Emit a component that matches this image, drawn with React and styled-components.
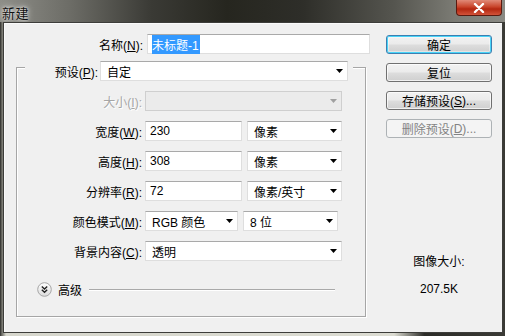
import React from "react";
import styled, { createGlobalStyle, css } from "styled-components";

const Global = createGlobalStyle`
  html, body {
    margin: 0;
    padding: 0;
    background: #2e2e2a;
  }
  body {
    font-family: "Liberation Sans", "Noto Sans CJK SC", sans-serif;
    font-size: 12px;
    color: #000;
  }
`;

const Window = styled.div`
  width: 505px;
  height: 336px;
  box-sizing: border-box;
  display: flex;
  flex-direction: column;
  padding: 0 2px 3px 2px;
  background: linear-gradient(90deg, #55554f 0%, #d6d6cc 1%, #dcdcd2 78%, #2c2c28 84%, #3a3a35 100%);
  border-left: 1px solid #3c3c38;
  box-sizing: border-box;
`;

const TitleBar = styled.div`
  height: 22px;
  margin: 0 -2px 0 -3px;
  padding-left: 2px;
  display: flex;
  align-items: flex-start;
  justify-content: space-between;
  background: linear-gradient(90deg, #8e8e88 0%, #6c6c66 14%, #3a3a35 30%, #26261f 45%, #2e2e29 60%, #55554f 78%, #7b7b74 90%, #8a8a84 100%);
`;

const Title = styled.span`
  margin-top: 3px;
  font-size: 13px;
  letter-spacing: 0.5px;
  color: #111;
  text-shadow: 0 0 6px rgba(255, 255, 255, 0.9), 0 0 3px rgba(255, 255, 255, 0.8);
`;

const CloseButton = styled.div`
  width: 44px;
  height: 15px;
  margin-right: 3px;
  border: 1px solid #5a1a10;
  border-top: none;
  border-radius: 0 0 4px 4px;
  background: linear-gradient(#e08a78 0%, #c9452c 45%, #b32710 60%, #d2533a 100%);
  display: flex;
  align-items: center;
  justify-content: center;
`;

const Client = styled.div`
  flex: 1;
  display: flex;
  background: #f0f0f0;
  border: 1px solid #3d3d3a;
  box-shadow: inset 1px 1px 0 #fafafa;
`;

const LeftColumn = styled.div`
  width: 362px;
  padding: 11px 0 0 12px;
  box-sizing: border-box;
`;

const NameRow = styled.div`
  display: flex;
  align-items: center;
  gap: 4px;
`;

const Label = styled.span`
  width: ${(p) => p.$w}px;
  flex: none;
  text-align: right;
  white-space: nowrap;
  color: ${(p) => (p.$disabled ? "#a6a6a6" : "#000")};
  text-shadow: ${(p) => (p.$disabled ? "1px 1px 0 #fff" : "none")};
`;

const field = css`
  height: 20px;
  box-sizing: border-box;
  flex: none;
  display: flex;
  align-items: center;
  border: 1px solid #dedede;
  border-top-color: #a9a9a9;
  background: #fff;
  white-space: nowrap;
`;

const TextBox = styled.div`
  ${field};
  width: ${(p) => p.$w}px;
  padding-left: 4px;
`;

const Selected = styled.span`
  background: #3399ff;
  color: #fff;
  padding: 1px 1px 1px 0;
`;

const SelectBox = styled.div`
  ${field};
  width: ${(p) => p.$w}px;
  padding: 0 4px 0 6px;
  justify-content: space-between;
  ${(p) =>
    p.$disabled &&
    css`
      background: #ebebeb;
      border-color: #cfcfcf;
    `}
`;

const GroupBox = styled.div`
  margin-top: 13px;
  width: 350px;
  height: 250px;
  box-sizing: border-box;
  border: 1px solid #a6a6a6;
  box-shadow: inset 1px 1px 0 #fff, 1px 1px 0 #fff;
  display: flex;
  flex-direction: column;
  gap: 10px;
`;

const PresetRow = styled.div`
  margin: -7px 0 0 8px;
  align-self: flex-start;
  display: flex;
  align-items: center;
  gap: 2px;
  padding-right: 5px;
  background: #f0f0f0;
`;

const FormRow = styled.div`
  display: flex;
  align-items: center;
  gap: 3px;
`;

const Controls = styled.div`
  display: flex;
  gap: 5px;
`;

const AdvancedRow = styled.div`
  margin: 8px 30px 0 20px;
  display: flex;
  align-items: center;
  height: 20px;
`;

const AdvancedText = styled.span`
  margin-left: 6px;
`;

const Rule = styled.div`
  flex: 1;
  margin-left: 7px;
  height: 1px;
  background: #a9a9a9;
  box-shadow: 0 1px 0 #fff;
`;

const RightColumn = styled.div`
  margin-left: 20px;
  width: 106px;
  padding-top: 12px;
  display: flex;
  flex-direction: column;
  gap: 9px;
`;

const Button = styled.div`
  height: 19px;
  box-sizing: border-box;
  display: flex;
  align-items: center;
  justify-content: center;
  border: 1px solid #707070;
  border-radius: 3px;
  background: linear-gradient(#f2f2f2 0%, #ebebeb 48%, #dddddd 52%, #cfcfcf 100%);
  box-shadow: inset 0 0 0 1px rgba(255, 255, 255, 0.7);
  ${(p) =>
    p.$default &&
    css`
      border-color: #3c7fb1;
      box-shadow: inset 0 0 0 1px #48d4f8, inset 0 0 0 2px rgba(255, 255, 255, 0.4);
    `}
  ${(p) =>
    p.$disabled &&
    css`
      border-color: #adb2b5;
      background: #f4f4f4;
      color: #838383;
      box-shadow: none;
    `}
`;

const SizeInfo = styled.div`
  margin-top: 107px;
  display: flex;
  flex-direction: column;
  align-items: center;
  gap: 11px;
  line-height: 16px;
`;

const Arrow = ({ disabled }) => (
  <svg width="7" height="4" viewBox="0 0 7 4">
    <polygon points="0,0 7,0 3.5,4" fill={disabled ? "#a0a0a0" : "#000"} />
  </svg>
);

const Key = ({ k }) => (
  <>
    (<u>{k}</u>):
  </>
);

const rows = [
  { label: "大小", k: "I", disabled: true, controls: [{ type: "select", w: 197, value: "", disabled: true }] },
  { label: "宽度", k: "W", controls: [{ type: "text", w: 97, value: "230" }, { type: "select", w: 95, value: "像素" }] },
  { label: "高度", k: "H", controls: [{ type: "text", w: 97, value: "308" }, { type: "select", w: 95, value: "像素" }] },
  { label: "分辨率", k: "R", controls: [{ type: "text", w: 97, value: "72" }, { type: "select", w: 95, value: "像素/英寸" }] },
  { label: "颜色模式", k: "M", controls: [{ type: "select", w: 93, value: "RGB 颜色" }, { type: "select", w: 95, value: "8 位" }] },
  { label: "背景内容", k: "C", controls: [{ type: "select", w: 197, value: "透明" }] },
];

const Control = ({ c }) =>
  c.type === "text" ? (
    <TextBox $w={c.w}>{c.value}</TextBox>
  ) : (
    <SelectBox $w={c.w} $disabled={c.disabled}>
      <span>{c.value}</span>
      <Arrow disabled={c.disabled} />
    </SelectBox>
  );

export default function App() {
  return (
    <>
      <Global />
      <Window>
        <TitleBar>
          <Title>新建</Title>
          <CloseButton>
            <svg width="12" height="10" viewBox="0 0 12 10">
              <path d="M2 1 L10 9 M10 1 L2 9" stroke="#fff" strokeWidth="2.4" strokeLinecap="round" />
            </svg>
          </CloseButton>
        </TitleBar>
        <Client>
          <LeftColumn>
            <NameRow>
              <Label $w={127}>
                名称<Key k="N" />
              </Label>
              <TextBox $w={223}>
                <Selected>未标题-1</Selected>
              </TextBox>
            </NameRow>
            <GroupBox>
              <PresetRow>
                <Label $w={73}>
                  预设<Key k="P" />
                </Label>
                <SelectBox $w={248}>
                  <span>自定</span>
                  <Arrow />
                </SelectBox>
              </PresetRow>
              {rows.map((r) => (
                <FormRow key={r.k}>
                  <Label $w={125} $disabled={r.disabled}>
                    {r.label}
                    <Key k={r.k} />
                  </Label>
                  <Controls>
                    {r.controls.map((c, i) => (
                      <Control key={i} c={c} />
                    ))}
                  </Controls>
                </FormRow>
              ))}
              <AdvancedRow>
                <svg width="15" height="15" viewBox="0 0 15 15">
                  <defs>
                    <linearGradient id="adv" x1="0" y1="0" x2="0" y2="1">
                      <stop offset="0" stopColor="#ffffff" />
                      <stop offset="1" stopColor="#dcdcdc" />
                    </linearGradient>
                  </defs>
                  <circle cx="7.5" cy="7.5" r="6.8" fill="url(#adv)" stroke="#a5a5a5" />
                  <path d="M4.8 4.5 L7.5 7 L10.2 4.5 M4.8 7.8 L7.5 10.3 L10.2 7.8" fill="none" stroke="#222" strokeWidth="1.4" />
                </svg>
                <AdvancedText>高级</AdvancedText>
                <Rule />
              </AdvancedRow>
            </GroupBox>
          </LeftColumn>
          <RightColumn>
            <Button $default>确定</Button>
            <Button>复位</Button>
            <Button>
              存储预设(<u>S</u>)...
            </Button>
            <Button $disabled>
              删除预设(<u>D</u>)...
            </Button>
            <SizeInfo>
              <span>图像大小:</span>
              <span>207.5K</span>
            </SizeInfo>
          </RightColumn>
        </Client>
      </Window>
    </>
  );
}
